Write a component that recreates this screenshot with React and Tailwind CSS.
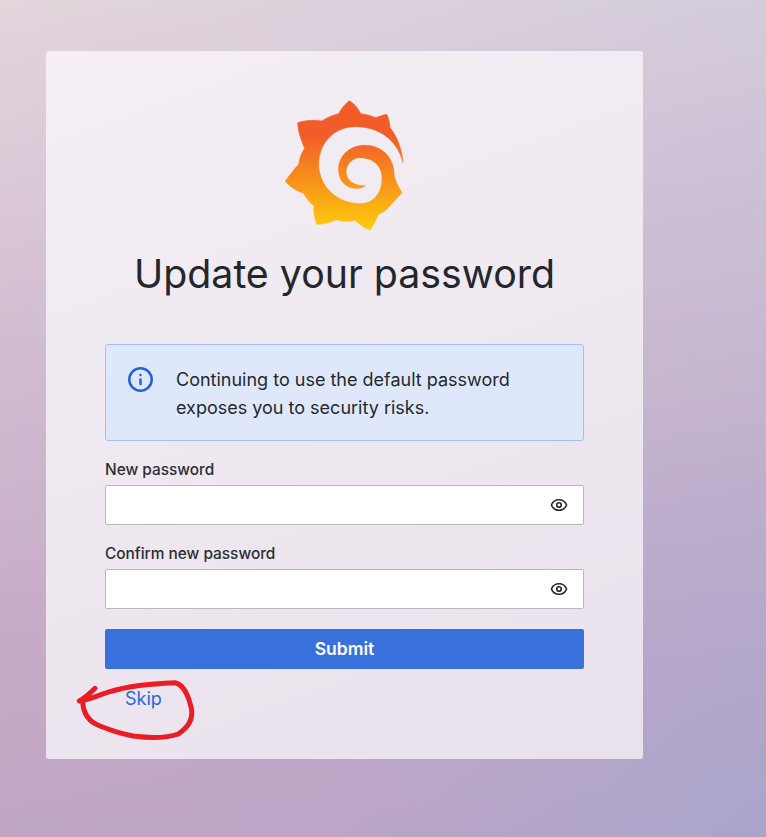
import { Eye, Info } from "lucide-react";

const GrafanaLogo = () => (
  <svg viewBox="0 0 450 450" className="w-[150px] h-[150px] block">
    <defs>
      <linearGradient id="logoFill" x1="0" y1="90" x2="0" y2="420" gradientUnits="userSpaceOnUse">
        <stop offset="0.15" stopColor="#f25c29" />
        <stop offset="1" stopColor="#fdcb0b" />
      </linearGradient>
    </defs>
    <path
      fill="url(#logoFill)"
      stroke="url(#logoFill)"
      strokeWidth="2"
      strokeLinejoin="round"
      d="M238 35 C250 42 264 56 272 74 C288 76 304 80 318 86 C328 82 340 78 350 76 C356 88 359 102 360 116 C384 146 396 184 399 220 C386 170 345 113 255 113 C190 113 146 165 146 225 C146 295 205 344 270 344 C318 344 342 300 335 255 C330 225 305 206 270 206 C245 206 228 228 228 248 C228 275 255 292 285 290 C268 306 205 302 206 240 C206 200 240 169 285 169 C335 169 371 205 372 255 C374 268 378 280 384 290 C388 298 392 304 396 310 C388 320 380 328 372 336 C360 354 344 368 326 376 C318 392 310 410 300 423 C284 418 268 406 256 394 C236 398 218 398 200 392 C182 400 160 406 141 406 C134 388 130 368 132 350 C118 340 108 326 100 312 C80 306 60 294 46 276 C58 260 72 242 86 226 C88 210 94 192 104 178 C94 154 84 128 83 101 C106 94 132 92 156 96 C170 86 188 78 206 74 C214 58 226 44 238 35 Z"
    />
  </svg>
);

const PasswordField = ({ label }) => (
  <div>
    <label className="block text-[15.4px] font-[450] leading-[22px] mb-[4px] text-[#2a2e33]">{label}</label>
    <div className="h-10 bg-white border border-[#b9b7bc] rounded-[2px] flex items-center justify-end pr-[15px]">
      <Eye size={18} strokeWidth={2.2} className="text-[#24292e]" />
    </div>
  </div>
);

const App = () => {
  return (
    <div
      className="w-[766px] h-[837px] overflow-hidden pt-[51px] pl-[46px] bg-[radial-gradient(circle_at_100%_100%,rgba(160,165,205,0.55)_0%,rgba(160,165,205,0)_40%),linear-gradient(to_right,rgba(150,160,210,0)_0%,rgba(150,160,210,0.2)_100%),linear-gradient(to_bottom,#e3d6dd_0%,#d0bbcf_45%,#c7aac6_78%,#c0a5c5_100%)]"
      style={{ fontFamily: "Inter, sans-serif" }}
    >
      <div className="relative w-[597px] h-[708px] rounded-[3px] bg-[linear-gradient(160deg,#f4eff4_0%,#efe8f0_50%,#e9e1ec_100%)] flex flex-col items-center">
        <div className="mt-[38px]">
          <GrafanaLogo />
        </div>
        <h1 className="mt-[11px] text-[39.3px] leading-[48px] font-normal text-[#24262d]">Update your password</h1>

        <div className="w-[479px] mt-[46px] flex flex-col">
          <div className="h-[97px] bg-[#dfe8fb] border border-[#a3bff5] rounded-[3px] flex pl-[21px] pt-[21px] gap-[22px]">
            <Info size={27} strokeWidth={2.2} className="text-[#1f62e0] shrink-0" />
            <p className="text-[18px] leading-[28px] text-[#24292e]">
              Continuing to use the default password
              <br />
              exposes you to security risks.
            </p>
          </div>

          <div className="mt-[18px] flex flex-col gap-[18px]">
            <PasswordField label="New password" />
            <PasswordField label="Confirm new password" />
          </div>

          <button className="mt-[20px] h-10 bg-[#3871dc] text-white text-[17.5px] font-semibold rounded-[2px]">
            Submit
          </button>

          <a className="mt-[19px] ml-[20px] text-[18px] leading-[22px] text-[#2868e0]">Skip</a>
        </div>

        {/* red marker scribble over the skip link */}
        <svg viewBox="0 0 480 390" className="absolute left-[14px] top-[569px] w-[160px] h-[130px]" fill="none">
          <path
            d="M105 205 C92 218 78 232 58 243 C90 238 120 224 150 215 C190 202 240 192 345 188 C368 192 385 225 394 265 C400 295 385 322 355 342 C320 354 265 354 220 348 C185 342 150 330 120 318 C92 308 70 285 68 245"
            stroke="#ec1c24"
            strokeWidth="15"
            strokeLinecap="round"
            strokeLinejoin="round"
          />
        </svg>
      </div>
    </div>
  );
};

export default App;
